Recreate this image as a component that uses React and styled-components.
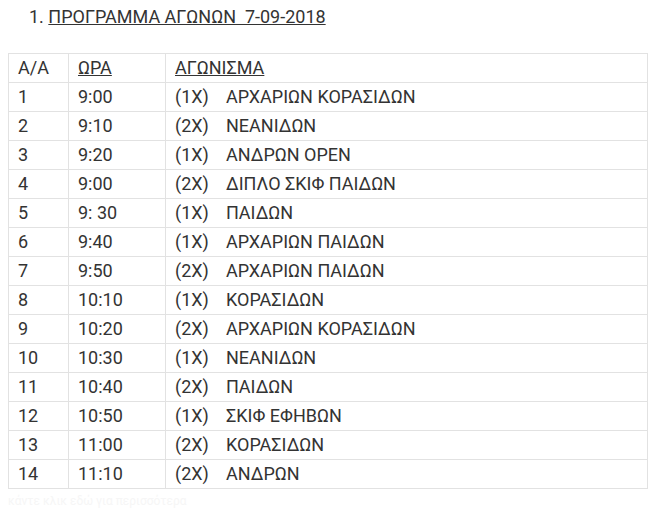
import React from 'react';
import styled, { createGlobalStyle } from 'styled-components';

const GlobalStyle = createGlobalStyle`
    body {
        margin: 0;
        background: #fff;
        font-family: Roboto, "Liberation Sans", sans-serif;
        color: #333;
    }
`;

const rows = [
    ['1', '9:00', '(1X)', 'ΑΡΧΑΡΙΩΝ ΚΟΡΑΣΙΔΩΝ'],
    ['2', '9:10', '(2X)', 'ΝΕΑΝΙΔΩΝ'],
    ['3', '9:20', '(1X)', 'ΑΝΔΡΩΝ OPEN'],
    ['4', '9:00', '(2X)', 'ΔΙΠΛΟ ΣΚΙΦ ΠΑΙΔΩΝ'],
    ['5', '9: 30', '(1X)', 'ΠΑΙΔΩΝ'],
    ['6', '9:40', '(1X)', 'ΑΡΧΑΡΙΩΝ ΠΑΙΔΩΝ'],
    ['7', '9:50', '(2X)', 'ΑΡΧΑΡΙΩΝ ΠΑΙΔΩΝ'],
    ['8', '10:10', '(1X)', 'ΚΟΡΑΣΙΔΩΝ'],
    ['9', '10:20', '(2X)', 'ΑΡΧΑΡΙΩΝ ΚΟΡΑΣΙΔΩΝ'],
    ['10', '10:30', '(1X)', 'ΝΕΑΝΙΔΩΝ'],
    ['11', '10:40', '(2X)', 'ΠΑΙΔΩΝ'],
    ['12', '10:50', '(1X)', 'ΣΚΙΦ ΕΦΗΒΩΝ'],
    ['13', '11:00', '(2X)', 'ΚΟΡΑΣΙΔΩΝ'],
    ['14', '11:10', '(2X)', 'ΑΝΔΡΩΝ'],
];

const App = () => {
    return (
        <Page>
            <GlobalStyle />
            <Titulo>
                1. <u>ΠΡΟΓΡΑΜΜΑ ΑΓΩΝΩΝ&nbsp; 7-09-2018</u>
            </Titulo>
            <Tabla>
                <colgroup>
                    <col style={{ width: 60 }} />
                    <col style={{ width: 97 }} />
                    <col />
                </colgroup>
                <thead>
                    <tr>
                        <Celda>Α/Α</Celda>
                        <Celda><u>ΩΡΑ</u></Celda>
                        <Celda><u>ΑΓΩΝΙΣΜΑ</u></Celda>
                    </tr>
                </thead>
                <tbody>
                    {rows.map(([n, hora, tipo, nombre]) => (
                        <tr key={n}>
                            <Celda>{n}</Celda>
                            <Celda>{hora}</Celda>
                            <Celda>
                                <Tipo>{tipo}</Tipo>
                                {nombre}
                            </Celda>
                        </tr>
                    ))}
                </tbody>
            </Tabla>
            <Borroso>κάντε κλικ εδώ για περισσότερα</Borroso>
        </Page>
    );
}

const Page = styled.div`
    padding: 5px 0 0 8px;
    width: 640px;
`;

const Titulo = styled.p`
    margin: 0 0 24px 21px;
    font-size: 18px;
    line-height: 24px;
`;

const Tabla = styled.table`
    width: 640px;
    border-collapse: collapse;
    table-layout: fixed;
    font-size: 18px;
`;

const Celda = styled.td`
    border: 1px solid #e2e2e2;
    padding: 4px 8px 4px 9px;
    line-height: 20px;
    height: 20px;
    text-align: left;
    font-weight: 400;
    white-space: nowrap;
`;

const Tipo = styled.span`
    display: inline-block;
    width: 51px;
`;

const Borroso = styled.div`
    margin-top: 5px;
    font-size: 12px;
    color: #f6f6f6;
`;

export default App;
